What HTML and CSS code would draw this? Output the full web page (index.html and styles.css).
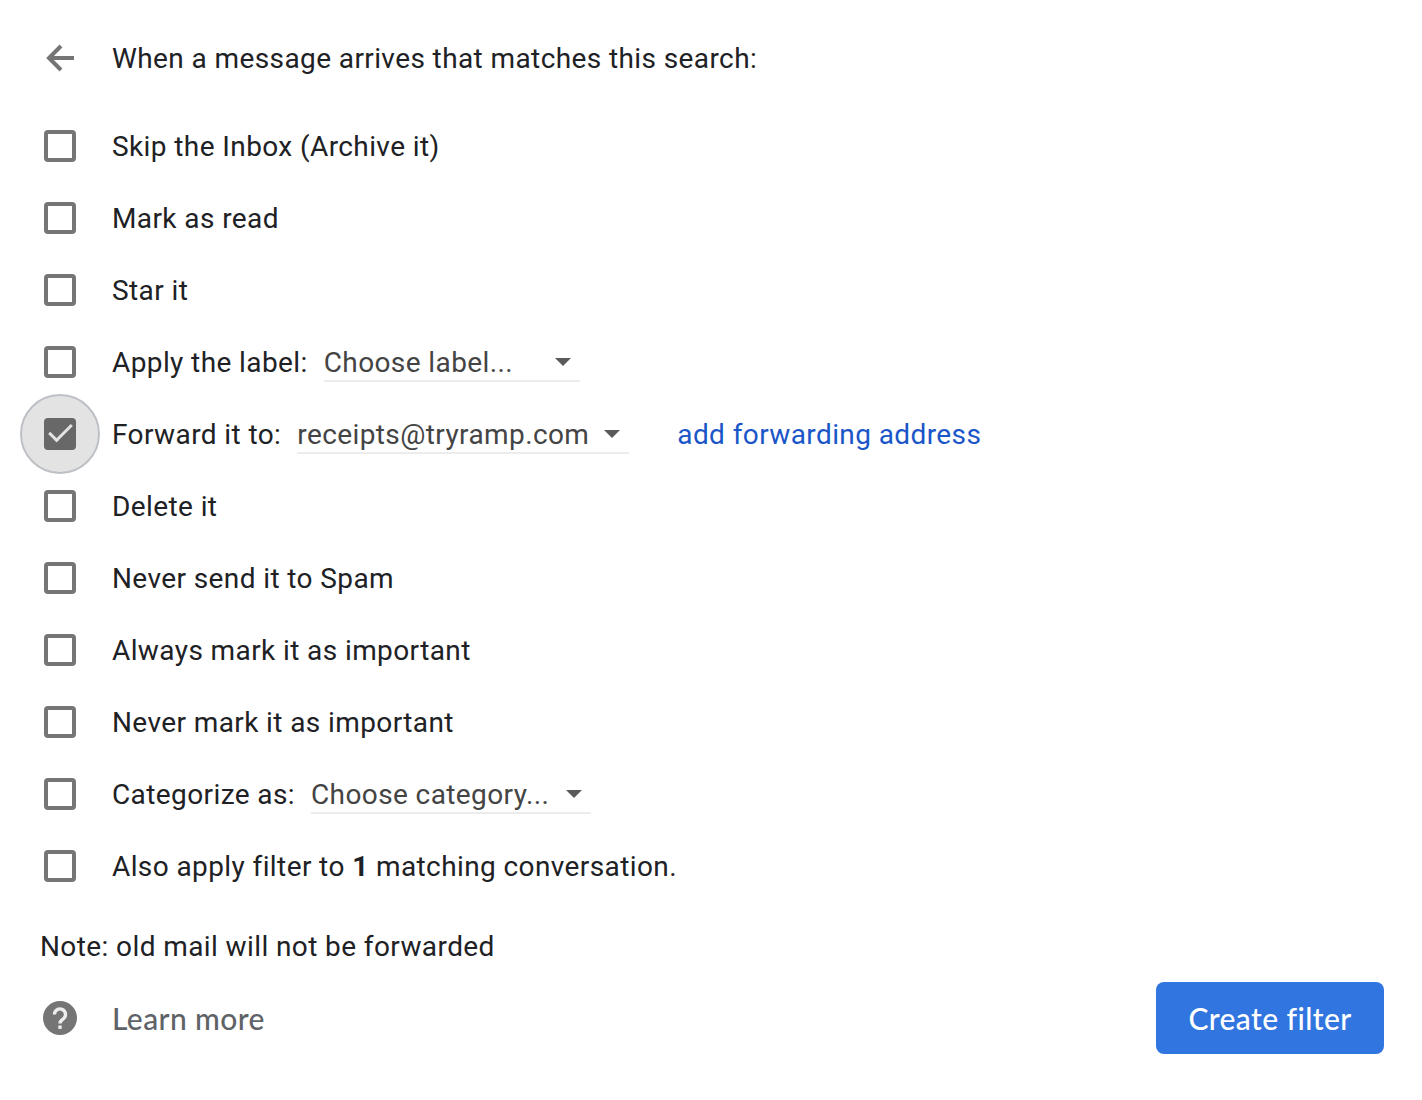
FILE: index.html
```html
<!DOCTYPE html>
<html lang="en">
<head>
<meta charset="utf-8">
<meta name="viewport" content="width=device-width, initial-scale=1">
<title>Create filter</title>
<link rel="stylesheet" href="styles.css">
</head>
<body>
<form class="filter">
  <header class="row header">
    <button class="back" type="button" aria-label="Back">
      <svg width="40" height="40" viewBox="0 0 40 40"><path d="M34 20H9M21 8L9 20l12 12" fill="none" stroke="#757575" stroke-width="4"/></svg>
    </button>
    <h1 class="title">When a message arrives that matches this search:</h1>
  </header>
  <div class="row"><input class="check" type="checkbox" id="skip"><label for="skip">Skip the Inbox (Archive it)</label></div>
  <div class="row"><input class="check" type="checkbox" id="read"><label for="read">Mark as read</label></div>
  <div class="row"><input class="check" type="checkbox" id="star"><label for="star">Star it</label></div>
  <div class="row"><input class="check" type="checkbox" id="apply"><label for="apply">Apply the label:</label>
    <span class="picker picker-label"><select class="select" aria-label="Label"><option>Choose label...</option></select></span></div>
  <div class="row"><input class="check" type="checkbox" id="forward" checked><label for="forward">Forward it to:</label>
    <span class="picker picker-forward"><select class="select" aria-label="Forwarding address"><option>receipts@tryramp.com</option></select></span>
    <a class="add" href="#">add forwarding address</a></div>
  <div class="row"><input class="check" type="checkbox" id="delete"><label for="delete">Delete it</label></div>
  <div class="row"><input class="check" type="checkbox" id="spam"><label for="spam">Never send it to Spam</label></div>
  <div class="row"><input class="check" type="checkbox" id="always"><label for="always">Always mark it as important</label></div>
  <div class="row"><input class="check" type="checkbox" id="never"><label for="never">Never mark it as important</label></div>
  <div class="row"><input class="check" type="checkbox" id="category"><label for="category">Categorize as:</label>
    <span class="picker picker-category"><select class="select" aria-label="Category"><option>Choose category...</option></select></span></div>
  <div class="row"><input class="check" type="checkbox" id="also"><label for="also">Also apply filter to <b>1</b> matching conversation.</label></div>
  <p class="note">Note: old mail will not be forwarded</p>
  <footer class="footer">
    <a class="learn" href="#">
      <svg class="help" width="40" height="40" viewBox="0 0 40 40"><circle cx="20" cy="20" r="17" fill="#757575"/><path d="M14.500 16.500a5.500 5.500 0 1 1 9.500 3.700c-2.200 2-4 2.600-4 5.300" fill="none" stroke="#eee" stroke-width="3.400"/><path d="M18.300 27.500h3.400v3.400h-3.400z" fill="#eee"/></svg>
      Learn more</a>
    <button class="create" type="submit">Create filter</button>
  </footer>
</form>
</body>
</html>
```
FILE: styles.css
```css
*, *::before, *::after { box-sizing: border-box; }
body {
  margin: 0;
  background: #fff;
  color: #202124;
  font: 28px/40px Roboto, sans-serif;
  letter-spacing: 0.4px;
}
.filter { padding: 22px 38px 46px 40px; }
.row { display: flex; align-items: center; height: 72px; }
.row label, .title, .add { padding-top: 2px; }
.header { margin-bottom: 16px; }
.title { margin: 0; font-size: inherit; font-weight: 400; }
.back {
  width: 40px;
  height: 40px;
  margin-right: 32px;
  padding: 0;
  border: 0;
  background: none;
}
.back svg { display: block; }
.check {
  appearance: none;
  display: grid;
  place-items: center;
  flex: none;
  width: 32px;
  height: 32px;
  margin: 0 36px 0 4px;
  border: 4px solid #757575;
  border-radius: 4px;
}
.check:checked {
  width: 80px;
  height: 80px;
  margin: -4px 12px -4px -20px;
  border: 2px solid #bdc1c6;
  border-radius: 50%;
  background: #e3e3e3;
}
.check:checked::before {
  content: "";
  width: 32px;
  height: 32px;
  border-radius: 4px;
  background: #686868;
  grid-area: 1 / 1;
}
.check:checked::after {
  content: "";
  width: 23px;
  height: 12px;
  margin-bottom: 8px;
  border: solid #e3e3e3;
  border-width: 0 0 3px 3px;
  transform: rotate(-45deg);
  grid-area: 1 / 1;
}
.picker {
  display: flex;
  align-items: center;
  height: 40px;
  margin-left: 16px;
  padding-top: 4px;
  border-bottom: 2px solid #ececec;
  position: relative;
}
.picker::after {
  content: "";
  position: absolute;
  top: 16px;
  right: 9px;
  border: solid transparent;
  border-width: 8px 8px 0;
  border-top-color: #5a5a5a;
  pointer-events: none;
}
.picker-label { width: 256px; }
.picker-forward { width: 332px; }
.picker-category { width: 280px; }
.select {
  appearance: none;
  width: 100%;
  padding: 0;
  border: 0;
  background: none;
  color: #444;
  font: inherit;
  letter-spacing: inherit;
}
.add { margin-left: 48px; color: #1a56c8; text-decoration: none; }
.note { margin: 25px 0 15px; }
.footer { display: flex; align-items: center; justify-content: space-between; }
.learn, .create { font: 500 30px/38px Lato, sans-serif; letter-spacing: 0.4px; }
.learn { display: flex; align-items: center; gap: 32px; color: #5f6368; text-decoration: none; }
.create {
  width: 228px;
  height: 72px;
  padding: 0;
  border: 0;
  border-radius: 8px;
  background: #3175e0;
  color: #fff;
}
```
